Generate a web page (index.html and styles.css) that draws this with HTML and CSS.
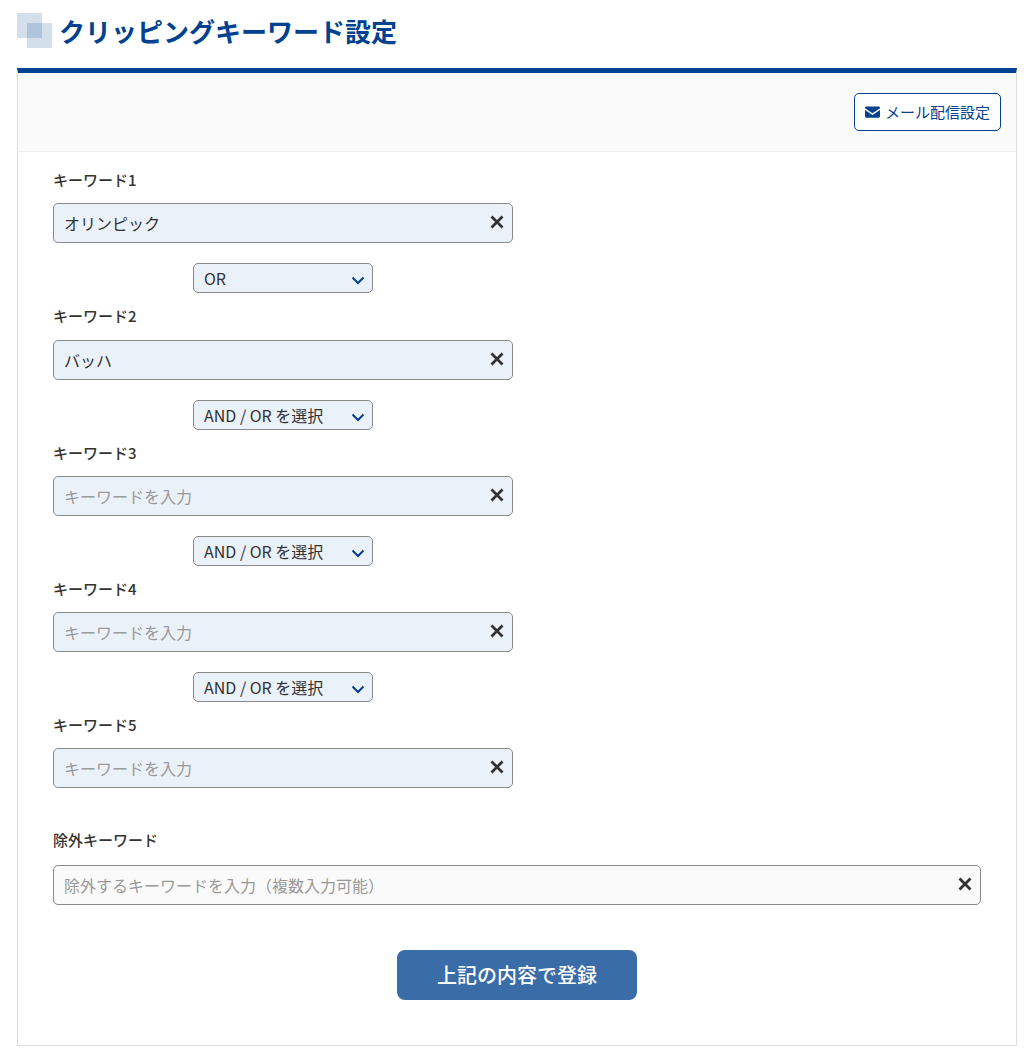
FILE: index.html
```html
<!DOCTYPE html>
<html lang="ja">
<head>
<meta charset="UTF-8">
<meta name="viewport" content="width=device-width, initial-scale=1.0">
<title>クリッピングキーワード設定</title>
<link rel="stylesheet" href="styles.css">
</head>
<body>

<h1 class="page-title"><span class="title-mark"><i></i><i></i></span>クリッピングキーワード設定</h1>

<div class="panel">
    <div class="panel-head">
        <a class="mail-btn" href="#">
            <svg class="mail-icon" viewBox="0 0 16 12"><path d="M1.5 0h13A1.5 1.5 0 0 1 16 1.5v.6L8 7.4 0 2.1v-.6A1.5 1.5 0 0 1 1.5 0z"/><path d="M0 3.9l8 5.3 8-5.3v6.6a1.5 1.5 0 0 1-1.5 1.5h-13A1.5 1.5 0 0 1 0 10.500z"/></svg>
            メール配信設定
        </a>
    </div>

    <form class="panel-body">
        <div class="keyword">
            <label class="label">キーワード1</label>
            <div class="input-wrap">
                <input class="text-input" type="text" value="オリンピック" placeholder="キーワードを入力">
                <svg class="clear-icon" viewBox="0 0 14 14"><path d="M1.500 1.500l11 11M12.500 1.500l-11 11"/></svg>
            </div>
            <div class="select-wrap">
                <select class="op-select"><option>AND / OR を選択</option><option selected>OR</option><option>AND</option></select>
                <svg class="arrow-icon" viewBox="0 0 14 9"><path d="M1.500 1.500L7 7l5.500-5.500"/></svg>
            </div>
        </div>
        <div class="keyword">
            <label class="label">キーワード2</label>
            <div class="input-wrap">
                <input class="text-input" type="text" value="バッハ" placeholder="キーワードを入力">
                <svg class="clear-icon" viewBox="0 0 14 14"><path d="M1.500 1.500l11 11M12.500 1.500l-11 11"/></svg>
            </div>
            <div class="select-wrap">
                <select class="op-select"><option>AND / OR を選択</option><option>OR</option><option>AND</option></select>
                <svg class="arrow-icon" viewBox="0 0 14 9"><path d="M1.500 1.500L7 7l5.500-5.500"/></svg>
            </div>
        </div>
        <div class="keyword">
            <label class="label">キーワード3</label>
            <div class="input-wrap">
                <input class="text-input" type="text" placeholder="キーワードを入力">
                <svg class="clear-icon" viewBox="0 0 14 14"><path d="M1.500 1.500l11 11M12.500 1.500l-11 11"/></svg>
            </div>
            <div class="select-wrap">
                <select class="op-select"><option>AND / OR を選択</option><option>OR</option><option>AND</option></select>
                <svg class="arrow-icon" viewBox="0 0 14 9"><path d="M1.500 1.500L7 7l5.500-5.500"/></svg>
            </div>
        </div>
        <div class="keyword">
            <label class="label">キーワード4</label>
            <div class="input-wrap">
                <input class="text-input" type="text" placeholder="キーワードを入力">
                <svg class="clear-icon" viewBox="0 0 14 14"><path d="M1.500 1.500l11 11M12.500 1.500l-11 11"/></svg>
            </div>
            <div class="select-wrap">
                <select class="op-select"><option>AND / OR を選択</option><option>OR</option><option>AND</option></select>
                <svg class="arrow-icon" viewBox="0 0 14 9"><path d="M1.500 1.500L7 7l5.500-5.500"/></svg>
            </div>
        </div>
        <div class="keyword">
            <label class="label">キーワード5</label>
            <div class="input-wrap">
                <input class="text-input" type="text" placeholder="キーワードを入力">
                <svg class="clear-icon" viewBox="0 0 14 14"><path d="M1.500 1.500l11 11M12.500 1.500l-11 11"/></svg>
            </div>
        </div>

        <div class="keyword exclude">
            <label class="label">除外キーワード</label>
            <div class="input-wrap wide">
                <input class="text-input plain" type="text" placeholder="除外するキーワードを入力（複数入力可能）">
                <svg class="clear-icon" viewBox="0 0 14 14"><path d="M1.500 1.500l11 11M12.500 1.500l-11 11"/></svg>
            </div>
        </div>

        <div class="actions">
            <button class="submit-btn" type="button">上記の内容で登録</button>
        </div>
    </form>
</div>

</body>
</html>
```

FILE: styles.css
```css
* {
    box-sizing: border-box;
}
body {
    font-family: "Noto Sans CJK JP", "Noto Sans", sans-serif;
    margin: 0;
    padding: 0 16px 17px 17px;
    color: #333;
    background: #fff;
}
.page-title {
    display: flex;
    align-items: center;
    height: 68px;
    margin: 0;
    padding-bottom: 7px;
    font-size: 26px;
    font-weight: 700;
    color: #004190;
}
.title-mark {
    position: relative;
    width: 35px;
    height: 35px;
    margin-right: 7px;
    flex: none;
}
.title-mark i {
    position: absolute;
    width: 25px;
    height: 25px;
    background: rgba(0, 65, 144, 0.17);
}
.title-mark i:first-child {
    top: 0;
    left: 0;
}
.title-mark i:last-child {
    top: 10px;
    left: 10px;
}
.panel {
    border: 1px solid #ddd;
    border-top: 5px solid #004190;
}
.panel-head {
    display: flex;
    justify-content: flex-end;
    align-items: center;
    height: 79px;
    padding: 0 15px 1px 0;
    background: #fafafa;
    border-bottom: 1px solid #eee;
}
.mail-btn {
    display: flex;
    align-items: center;
    width: 147px;
    height: 38px;
    padding-left: 10px;
    border: 1px solid #004190;
    border-radius: 5px;
    background: #fff;
    color: #004190;
    font-size: 15px;
    text-decoration: none;
}
.mail-icon {
    width: 15px;
    height: 12px;
    margin-right: 5px;
    fill: #004190;
}
.panel-body {
    padding: 16.2px 35px 45px 35px;
}
.keyword {
    height: 136.2px;
}
.label {
    display: block;
    height: 35.2px;
    font-size: 15px;
    line-height: 24px;
    font-weight: 500;
}
.input-wrap {
    position: relative;
    width: 460px;
}
.input-wrap.wide {
    width: 928px;
}
.text-input {
    display: block;
    width: 100%;
    height: 40px;
    padding: 0 36px 0 10px;
    border: 1px solid #8a8a8a;
    border-radius: 5px;
    background: #eaf1f9;
    color: #333;
    font-family: inherit;
    font-size: 16px;
}
.text-input.plain {
    background: #fafafa;
}
.text-input::placeholder {
    color: #999;
    opacity: 1;
}
.clear-icon {
    position: absolute;
    top: 12px;
    right: 9px;
    width: 14px;
    height: 14px;
    fill: none;
    stroke: #333;
    stroke-width: 2.8;
}
.select-wrap {
    position: relative;
    width: 180px;
    margin: 20px 0 0 140px;
}
.op-select {
    display: block;
    width: 100%;
    height: 30px;
    padding: 0 28px 0 10px;
    border: 1px solid #8a8a8a;
    border-radius: 5px;
    background: #eaf1f9;
    color: #333;
    font-family: inherit;
    font-size: 16px;
    appearance: none;
}
.arrow-icon {
    position: absolute;
    top: 13px;
    right: 8px;
    width: 14px;
    height: 9px;
    fill: none;
    stroke: #004190;
    stroke-width: 2;
    pointer-events: none;
}
.exclude {
    height: auto;
    margin-top: -21px;
}
.exclude .label {
    height: 36.8px;
}
.actions {
    display: flex;
    justify-content: center;
    margin-top: 45px;
}
.submit-btn {
    width: 240px;
    height: 50px;
    border: none;
    border-radius: 8px;
    background: #3a6ca8;
    color: #fff;
    font-family: inherit;
    font-size: 20px;
    font-weight: 500;
}
```
